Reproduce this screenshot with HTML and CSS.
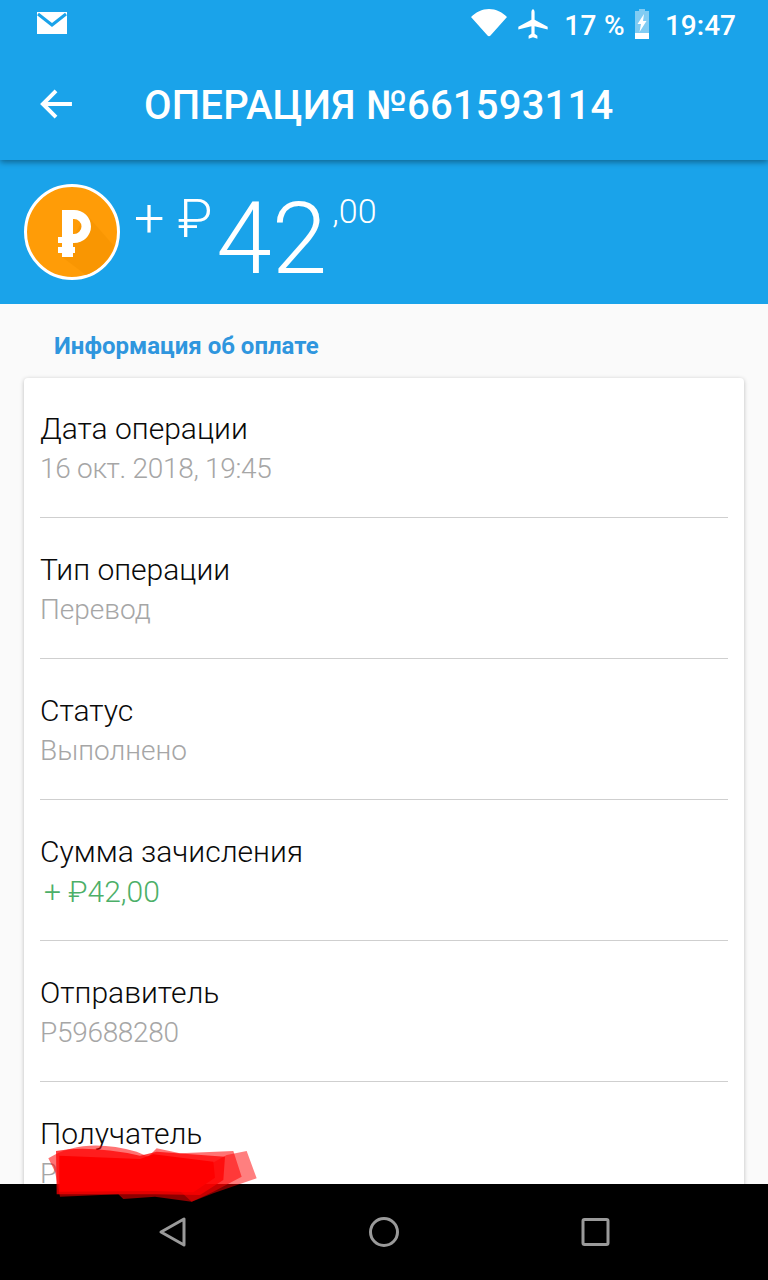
FILE: index.html
```html
<!DOCTYPE html>
<html lang="ru">
<head>
<meta charset="utf-8">
<title>Операция</title>
<link rel="stylesheet" href="styles.css">
</head>
<body>
<div class="app">
  <header class="top">
    <div class="status">
      <svg class="ic-mail" viewBox="0 0 32 24"><path fill="#fff" d="M1 1h30v22H1z"/><path fill="none" stroke="#1aa3ea" stroke-width="3" d="M2 3l14 11L30 3"/></svg>
      <div class="status-right">
        <svg class="ic-wifi" viewBox="0 0 36 28"><path fill="#fff" d="M0 8C5 3 11 0 18 0s13 3 18 8L19.500 26.500c-.8 1-2.200 1-3 0z"/></svg>
        <svg class="ic-plane" viewBox="0 0 24 24"><path fill="#fff" d="M23 16.200v-2.100l-9.800-5.200V3.200C13.200 2.300 12.700 1 12 1s-1.200 1.300-1.200 2.200v5.700L1 14.100v2.100l9.800-2.600v5.700l-2.100 1.600V23l3.300-1 3.300 1v-2.100l-2.100-1.600v-5.700z"/></svg>
        <span class="st-text st-pct">17 %</span>
        <svg class="ic-batt" viewBox="0 0 16 30"><path fill="#fff" fill-opacity=".45" d="M5 0h6v2h4v28H1V2h4z"/><path fill="#fff" d="M1 24h14v6H1z"/><path fill="#fff" d="M10 5L3.500 15h3.500L5.500 23l7-11H9z"/></svg>
        <span class="st-text">19:47</span>
      </div>
    </div>
    <div class="toolbar">
      <svg class="ic-back" viewBox="0 0 34 32"><path fill="none" stroke="#fff" stroke-width="4.200" d="M34 16H4M17 2L3 16l14 14"/></svg>
      <h1 class="title">ОПЕРАЦИЯ №661593114</h1>
    </div>
  </header>

  <section class="hero">
    <div class="coin">
      <svg class="coin-svg" viewBox="0 0 96 96">
        <circle cx="48" cy="48" r="46.500" fill="#ff9c07" stroke="#fff" stroke-width="3"/>
        <path fill="#f59300" fill-opacity=".6" d="M62 30L90 62A45 45 0 0 1 62 91L38 73z"/>
        <path fill="#fff" fill-rule="evenodd" d="M38 26h12a17 16.500 0 0 1 0 33h-1v4h2v6h-2v4H38v-4h-4v-6h4v-4h-4v-6h4zM49 35v15h1a7.500 7.500 0 0 0 0-15z"/>
      </svg>
    </div>
    <div class="amount">
      <span class="sign">+ ₽</span>
      <span class="big">42</span>
      <span class="cents">,00</span>
    </div>
  </section>

  <main class="content">
    <h2 class="section">Информация об оплате</h2>
    <div class="card">
      <div class="row"><div class="label">Дата операции</div><div class="value num">16 окт. 2018, 19:45</div></div>
      <div class="row"><div class="label">Тип операции</div><div class="value">Перевод</div></div>
      <div class="row"><div class="label">Статус</div><div class="value">Выполнено</div></div>
      <div class="row"><div class="label">Сумма зачисления</div><div class="value green">+ ₽42,00</div></div>
      <div class="row"><div class="label">Отправитель</div><div class="value num">P59688280</div></div>
      <div class="row"><div class="label">Получатель</div><div class="value">P</div></div>
    </div>
  </main>

  <nav class="navbar">
    <svg class="nav-ic" viewBox="0 0 32 32"><path fill="none" stroke="#9a9a9a" stroke-width="3" stroke-linejoin="round" d="M27 3v26L4 16z"/></svg>
    <svg class="nav-ic" viewBox="0 0 32 32"><circle cx="16" cy="16" r="13.500" fill="none" stroke="#9a9a9a" stroke-width="3"/></svg>
    <svg class="nav-ic" viewBox="0 0 32 32"><rect x="4" y="3.500" width="25" height="25" rx="1.500" fill="none" stroke="#9a9a9a" stroke-width="3"/></svg>
  </nav>

  <svg class="scribble" viewBox="0 0 675 225">
    <path fill="#f00" fill-opacity=".5" d="M560 60L620 48L650 130L600 147L520 175L455 200L400 150z"/>
    <path fill="#f00" fill-opacity=".55" d="M25 70Q130 5 290 50L325 65L350 40L420 55L580 48L605 125L520 170L455 200L345 185L250 192L235 178L60 185L45 110z"/>
    <path fill="#f00" fill-opacity=".75" d="M48 48Q150 30 300 62L350 50L555 65L550 135L480 180L345 178L50 178z"/>
    <path fill="#f00" d="M58 62L300 72L340 58L520 80L525 128L460 172L345 168L58 170z"/>
  </svg>
</div>
</body>
</html>
```
FILE: styles.css
```css
* { box-sizing: border-box; }
html, body { margin: 0; padding: 0; }
body { font-family: Roboto, "Liberation Sans", sans-serif; background: #fafafa; }
.app { width: 768px; height: 1280px; display: flex; flex-direction: column; overflow: hidden; position: relative; }

.top { background: #1aa3ea; height: 160px; position: relative; z-index: 2; box-shadow: 0 2px 6px rgba(0,0,0,.4); flex: none; }
.status { height: 48px; display: flex; align-items: center; justify-content: space-between; padding: 0 32px 0 36px; }
.ic-mail { width: 32px; height: 24px; margin-top: -3px; }
.status-right { display: flex; align-items: center; }
.ic-wifi { width: 36px; height: 28px; margin-right: 10px; margin-top: -3px; }
.ic-plane { width: 32px; height: 32px; margin-right: 15px; margin-top: -1px; }
.ic-batt { width: 16px; height: 30px; margin-right: 15px; margin-top: -1px; }
.st-text { color: #fff; font-size: 28px; font-weight: 500; line-height: 48px; padding-top: 3px; }
.st-pct { margin-right: 9px; letter-spacing: .3px; }

.toolbar { height: 112px; display: flex; align-items: center; padding: 0 0 0 40px; }
.ic-back { width: 32px; height: 30px; margin-right: 72px; }
.title { margin: 3px 0 0; color: #fff; font-size: 40px; font-weight: 500; line-height: 48px; letter-spacing: .2px; white-space: nowrap; }

.hero { background: #1aa3ea; height: 144px; flex: none; display: flex; padding: 24px 0 0 24px; }
.coin { width: 96px; height: 96px; flex: none; }
.coin-svg { width: 96px; height: 96px; display: block; }
.amount { color: #fff; font-weight: 300; display: flex; align-items: flex-start; margin-left: 14px; }
.sign { font-size: 54px; line-height: 66px; margin-top: 2px; white-space: nowrap; }
.big { font-size: 100px; line-height: 110px; font-weight: 300; margin-left: 4px; }
.cents { font-size: 34px; line-height: 40px; margin-left: 5px; margin-top: 7px; }

.content { flex: 1; min-height: 0; overflow: hidden; padding: 0 24px; }
.section { margin: 0; padding: 26px 0 0 30px; height: 74px; color: #2f96de; font-size: 24px; font-weight: 700; line-height: 32px; }
.card { background: #fff; border-radius: 4px; box-shadow: 0 1px 4px rgba(0,0,0,.25); padding: 0 16px; }
.row { height: 141px; padding-top: 32px; border-bottom: 1px solid #cfcfcf; }
.row:first-child { height: 140px; padding-top: 31px; }
.label { color: #0a0a0a; font-size: 30px; font-weight: 300; line-height: 40px; }
.value { color: #a6a6a6; font-size: 28px; font-weight: 300; line-height: 40px; }
.value.num { letter-spacing: -.3px; }
.value.green { color: #4caf68; font-size: 30px; padding-left: 4px; }
.scribble { position: absolute; left: 40px; top: 1135px; width: 225px; height: 75px; z-index: 4; }

.navbar { height: 96px; flex: none; background: #000; display: flex; align-items: center; justify-content: space-between; padding: 0 157px; position: relative; z-index: 3; }
.nav-ic { width: 32px; height: 32px; }
```
